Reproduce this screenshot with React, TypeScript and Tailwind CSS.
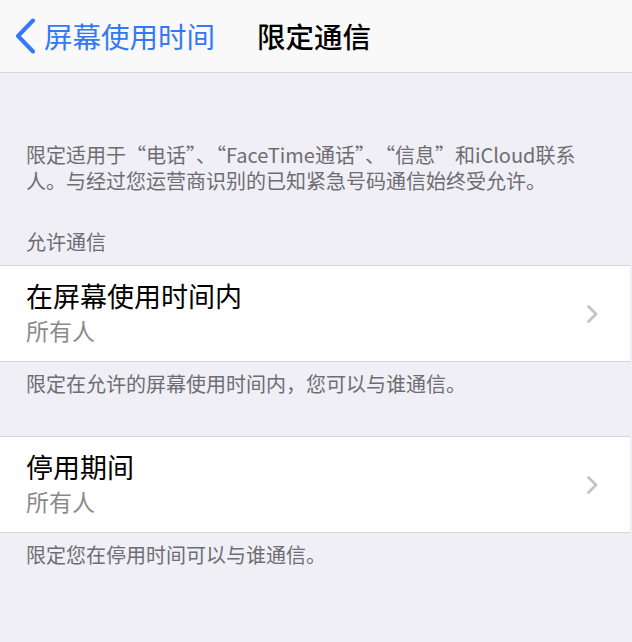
const cjk = { fontFamily: '"Noto Sans CJK SC", "Noto Sans", sans-serif' };

function Chevron() {
  return (
    <svg width="13" height="20" viewBox="0 0 13 20" fill="none" className="shrink-0">
      <path d="M2.5 2.5 L10 10 L2.5 17.5" stroke="#c4c4c7" strokeWidth="2.8" strokeLinecap="round" strokeLinejoin="round" />
    </svg>
  );
}

function Cell({ title, value }: { title: string; value: string }) {
  return (
    <div className="mr-[2px] flex h-[97px] items-center border-y border-[#d6d6da] bg-white pl-[26px] pr-[31px]">
      <div className="flex h-full flex-1 flex-col pt-[13px]">
        <span className="text-[27px] leading-[34px] text-black">{title}</span>
        <span className="mt-[2px] text-[23px] leading-[30px] text-[#8a8a8e]">{value}</span>
      </div>
      <Chevron />
    </div>
  );
}

export default function App() {
  return (
    <div className="h-[642px] w-[632px] overflow-hidden bg-[#f0eff5]" style={cjk}>
      {/* 导航栏 */}
      <div className="flex h-[73px] items-center border-b border-[#d8d8dc] bg-[#f9f9f9]">
        <div className="flex items-center pl-[15px]">
          <svg width="21" height="36" viewBox="0 0 21 36" fill="none">
            <path d="M18 2.5 L3 18 L18 33.5" stroke="#3478f6" strokeWidth="4" strokeLinecap="round" strokeLinejoin="round" />
          </svg>
          <span className="ml-[8px] text-[28.5px] leading-none text-[#3478f6]">屏幕使用时间</span>
        </div>
        <span className="ml-[42px] text-[28.5px] font-medium leading-none text-black">限定通信</span>
      </div>

      {/* 说明 */}
      <p className="mt-[69px] px-[26px] text-[20px] leading-[26px] text-[#6d6d72]">
        限定适用于“电话”、“FaceTime通话”、“信息”和iCloud联系
        <br />
        人。与经过您运营商识别的已知紧急号码通信始终受允许。
      </p>

      <div className="mt-[35px] px-[26px] pb-[10px] text-[20px] leading-[26px] text-[#6d6d72]">允许通信</div>
      <Cell title="在屏幕使用时间内" value="所有人" />
      <p className="mt-[9px] px-[26px] text-[20px] leading-[26px] text-[#6d6d72]">
        限定在允许的屏幕使用时间内，您可以与谁通信。
      </p>

      <div className="mt-[39px]">
        <Cell title="停用期间" value="所有人" />
      </div>
      <p className="mt-[9px] px-[26px] text-[20px] leading-[26px] text-[#6d6d72]">
        限定您在停用时间可以与谁通信。
      </p>
    </div>
  );
}
